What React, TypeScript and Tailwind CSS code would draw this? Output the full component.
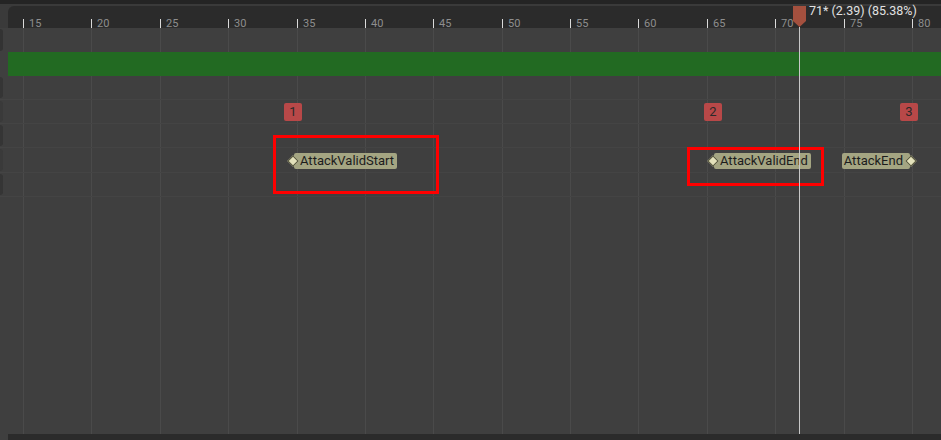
import React from "react";

const PX = 889 / 65;
const xOf = (f: number): number => 23 + (f - 15) * PX;

const ticks = [15, 20, 25, 30, 35, 40, 45, 50, 55, 60, 65, 70, 75, 80];

const notifies = [
  { n: 1, name: "AttackValidStart", x: 293, flip: false },
  { n: 2, name: "AttackValidEnd", x: 713, flip: false },
  { n: 3, name: "AttackEnd", x: 909, flip: true },
];

const rows = [
  { h: "h-[24px]", tab: "bg-[#353535]" },
  { h: "h-[24px]", tab: "bg-[#3a3a3a]" },
  { h: "h-[24px]", tab: "bg-[#353535]" },
  { h: "h-[25px]", tab: "bg-[#3a3a3a]" },
  { h: "h-[24px]", tab: "bg-[#353535]" },
];

const Diamond = () => (
  <div className="h-[8px] w-[8px] rotate-45 border border-[#55553d] bg-[#e3e1bb]" />
);

const App = () => {
  return (
    <div className="relative flex h-[440px] w-[941px] flex-col overflow-hidden bg-[#3a3a3a] font-[Roboto,sans-serif]">
      <div className="h-[4px] bg-[#242424]" />
      <div className="h-[2px]" />

      {/* ruler */}
      <div className="flex h-[22px]">
        <div className="w-2" />
        <div className="relative flex-1 rounded-tl-md bg-[#2b2b2b]">
          {ticks.map((t) => (
            <div
              key={t}
              className="absolute top-[13px] flex h-[9px] items-end"
              style={{ left: Math.round(xOf(t)) - 8 }}
            >
              <div className="h-[9px] w-px bg-[#dadada]" />
              <span className="ml-[5px] text-[11px] leading-[9px] text-[#8e8e8e]">
                {t}
              </span>
            </div>
          ))}
        </div>
      </div>

      {/* tracks */}
      <div className="relative flex-1 bg-[#3f3f3f]">
        {ticks.map((t) => (
          <div
            key={t}
            className="absolute top-0 bottom-0 w-px bg-[#4a4a4a]"
            style={{ left: Math.round(xOf(t)) }}
          />
        ))}

        <div className="relative flex flex-col">
          <div className="flex h-[24px]">
            <div className="my-[1px] w-[3px] rounded-r-sm bg-[#333333]" />
          </div>
          <div className="ml-2 h-[24px] bg-[#226a22]" />
          {rows.map((r, i) => (
            <div key={i} className={`flex ${r.h} border-b border-[#444444]`}>
              <div className={`my-[1px] w-[3px] rounded-r-sm ${r.tab}`} />
            </div>
          ))}
        </div>

        {notifies.map((nt) => (
          <React.Fragment key={nt.n}>
            <div
              className="absolute top-[75px] flex h-[18px] w-[18px] items-center justify-center rounded-[2px] bg-[#b84848] text-[13px] text-[#2a2a2a]"
              style={{ left: nt.x - 9 }}
            >
              {nt.n}
            </div>
            {nt.flip ? (
              <div
                className="absolute top-[125px] flex h-[16px] items-center"
                style={{ right: 941 - nt.x - 6 }}
              >
                <div className="flex h-[16px] items-center rounded-[2px] bg-[#a4a582] pr-[7px] pl-[2px] text-[13px] text-[#1c1c1c]">
                  {nt.name}
                </div>
                <div className="-ml-[3px]">
                  <Diamond />
                </div>
              </div>
            ) : (
              <div
                className="absolute top-[125px] flex h-[16px] items-center"
                style={{ left: nt.x - 4 }}
              >
                <div className="relative z-10">
                  <Diamond />
                </div>
                <div className="-ml-[3px] flex h-[16px] items-center rounded-[2px] bg-[#a4a582] pr-[3px] pl-[6px] text-[13px] text-[#1c1c1c]">
                  {nt.name}
                </div>
              </div>
            )}
          </React.Fragment>
        ))}

        {/* annotation boxes */}
        <div className="absolute top-[107px] left-[273px] h-[59px] w-[166px] border-[3px] border-[#ff0000]" />
        <div className="absolute top-[119px] left-[687px] h-[39px] w-[137px] border-[3px] border-[#ff0000]" />
      </div>

      <div className="flex h-[6px]">
        <div className="w-2 bg-[#3f3f3f]" />
        <div className="flex-1 bg-[#2b2b2b]" />
      </div>

      {/* scrubber */}
      <div className="absolute top-[27px] bottom-[6px] left-[799px] w-px bg-[#c8c8c8]" />
      <svg
        className="absolute top-[6px] left-[793px]"
        width="13"
        height="21"
        viewBox="0 0 13 21"
      >
        <polygon points="0,0 13,0 13,15 6.5,21 0,15" fill="#a4503e" />
      </svg>
      <div className="absolute top-[4px] left-[809px] text-[12.5px] leading-[13px] text-[#e2e2e2]">
        71* (2.39) (85.38%)
      </div>
    </div>
  );
};

export default App;
